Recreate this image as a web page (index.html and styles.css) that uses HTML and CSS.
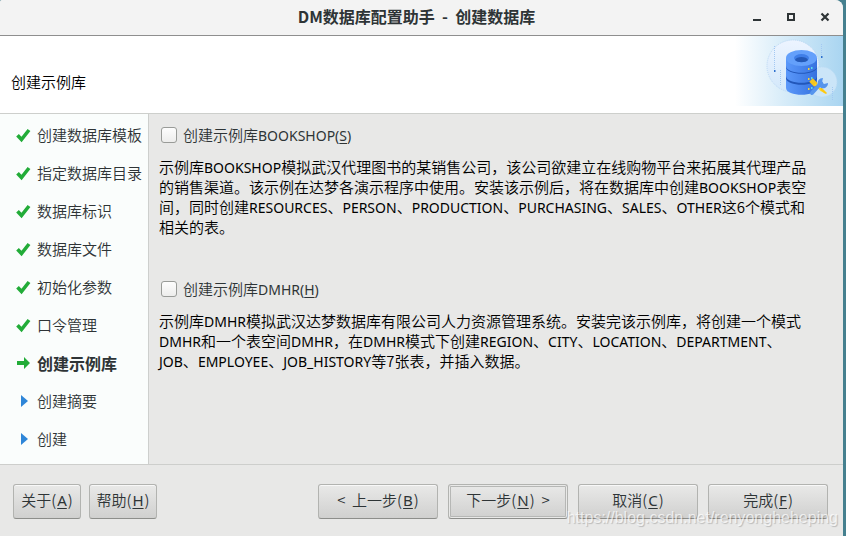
FILE: index.html
```html
<!DOCTYPE html>
<html lang="zh-CN">
<head>
    <meta charset="UTF-8">
    <meta name="viewport" content="width=device-width, initial-scale=1.0">
    <title>DM数据库配置助手 - 创建数据库</title>
    <link rel="stylesheet" href="styles.css">
</head>
<body>
<div class="window">
    <!-- Title bar -->
    <header class="titlebar">
        <h1>DM数据库配置助手&nbsp; - &nbsp;创建数据库</h1>
        <div class="window-buttons">
            <button aria-label="最小化"><svg width="10" height="10" viewBox="0 0 10 10"><path d="M1 8h8" stroke="#2e3436" stroke-width="2"/></svg></button>
            <button aria-label="最大化"><svg width="10" height="10" viewBox="0 0 10 10"><path d="M2 2h6v6H2z" fill="none" stroke="#2e3436" stroke-width="2"/></svg></button>
            <button aria-label="关闭"><svg width="10" height="10" viewBox="0 0 10 10"><path d="M1.500 1.500l7 7M8.500 1.500l-7 7" stroke="#2e3436" stroke-width="2.200"/></svg></button>
        </div>
    </header>

    <!-- Page heading -->
    <div class="banner">
        <h2>创建示例库</h2>
        <svg class="banner-art" width="108" height="70" viewBox="0 0 108 70">
            <defs>
                <linearGradient id="sky"><stop offset="0" stop-color="#fff"/><stop offset="0.500" stop-color="#d3eaf8"/><stop offset="1" stop-color="#a9d5f1"/></linearGradient>
                <linearGradient id="disk"><stop offset="0" stop-color="#5b98fa"/><stop offset="1" stop-color="#3672df"/></linearGradient>
                <linearGradient id="bubble" x2="0" y2="1"><stop offset="0" stop-color="#edf4ff"/><stop offset="1" stop-color="#d3e8fa"/></linearGradient>
            </defs>
            <path d="M0 0h108v70H0z" fill="url(#sky)"/>
            <circle cx="58" cy="30" r="26" fill="url(#bubble)" stroke="#bcd8f5" stroke-dasharray="1 1"/>
            <circle cx="87" cy="46" r="15" fill="#cbe5f8" stroke="#bcdcf5" stroke-dasharray="1 1"/>
            <path d="M39.500 10v25M45.500 34v15M86.500 8v12M97.500 51v13" stroke="#a3c8f2" stroke-dasharray="1 1"/>
            <path d="M39 34h1.500v2H39zM86 20h1.500v2H86z" fill="#2d70cf"/>
            <path d="M51 42v10c0 9 31 9 31 0V42z" fill="url(#disk)"/>
            <path d="M51 42c0 9 31 9 31 0v-3H51z" fill="#2257ba"/>
            <path d="M51 32v8c0 9 31 9 31 0v-8z" fill="url(#disk)"/>
            <path d="M51 31c0 9 31 9 31 0v-3H51z" fill="#2257ba"/>
            <path d="M51 22v8c0 9 31 9 31 0v-8z" fill="url(#disk)"/>
            <ellipse cx="66.500" cy="22" rx="15.500" ry="8" fill="#64a0fb"/>
            <ellipse cx="66.500" cy="22" rx="7.500" ry="4" fill="#3f7ee8"/>
            <path d="M60 24c1-4 12-4 13 0-2 3-11 3-13 0z" fill="#2459b7"/>
            <path d="M73 32h1.500v2H73zM73 42h1.500v2H73zM73 52h1.500v2H73z" fill="#f6cf3a"/>
            <path d="M76 31h1.500v2H76zM76 41h1.500v2H76zM76 51h1.500v2H76z" fill="#58dcec"/>
            <path d="M76 44l5 5" stroke="#f4c520" stroke-width="5"/>
            <path d="M80 48l7 7" stroke="#ffd426" stroke-width="2"/>
            <path d="M85 52l2 0 5 5-1 1c-3-1-5-3-6-6z" fill="#ffc90e"/>
            <path d="M77 57l9-10" stroke="#5695ed" stroke-width="4" stroke-linecap="round"/>
            <path d="M83 49c-1-4 1-7 5-7l-1 4 2 2 4-1c0 4-3 6-7 5z" fill="#5695ed"/>
        </svg>
    </div>

    <div class="content">
        <!-- Wizard steps -->
        <ol class="steps">
            <li><svg class="icon" viewBox="0 0 16 16"><path d="M2.500 8.200l4 4.300L14 3" fill="none" stroke="#22ac38" stroke-width="3.600"/></svg>创建数据库模板</li>
            <li><svg class="icon" viewBox="0 0 16 16"><path d="M2.500 8.200l4 4.300L14 3" fill="none" stroke="#22ac38" stroke-width="3.600"/></svg>指定数据库目录</li>
            <li><svg class="icon" viewBox="0 0 16 16"><path d="M2.500 8.200l4 4.300L14 3" fill="none" stroke="#22ac38" stroke-width="3.600"/></svg>数据库标识</li>
            <li><svg class="icon" viewBox="0 0 16 16"><path d="M2.500 8.200l4 4.300L14 3" fill="none" stroke="#22ac38" stroke-width="3.600"/></svg>数据库文件</li>
            <li><svg class="icon" viewBox="0 0 16 16"><path d="M2.500 8.200l4 4.300L14 3" fill="none" stroke="#22ac38" stroke-width="3.600"/></svg>初始化参数</li>
            <li><svg class="icon" viewBox="0 0 16 16"><path d="M2.500 8.200l4 4.300L14 3" fill="none" stroke="#22ac38" stroke-width="3.600"/></svg>口令管理</li>
            <li class="current" aria-current="step"><svg class="icon" viewBox="0 0 16 16"><path d="M2 6h7V2l6 6-6 6v-4H2z" fill="#22ac38"/></svg>创建示例库</li>
            <li><svg class="icon" viewBox="0 0 16 16"><path d="M6 2l7 6-7 6z" fill="#2e86d8"/></svg>创建摘要</li>
            <li><svg class="icon" viewBox="0 0 16 16"><path d="M6 2l7 6-7 6z" fill="#2e86d8"/></svg>创建</li>
        </ol>

        <!-- Sample databases -->
        <main class="options">
            <section>
                <label class="check"><input type="checkbox"><span>创建示例库<span class="en">BOOKSHOP(<u>S</u>)</span></span></label>
                <p>示例库<span class="en">BOOKSHOP</span>模拟武汉代理图书的某销售公司，该公司欲建立在线购物平台来拓展其代理产品的销售渠道。该示例在达梦各演示程序中使用。安装该示例后，将在数据库中创建<span class="en">BOOKSHOP</span>表空间，同时创建<span class="en">RESOURCES</span>、<span class="en">PERSON</span>、<span class="en">PRODUCTION</span>、<span class="en">PURCHASING</span>、<span class="en">SALES</span>、<span class="en">OTHER</span>这6个模式和相关的表。</p>
            </section>
            <section>
                <label class="check"><input type="checkbox"><span>创建示例库<span class="en">DMHR(<u>H</u>)</span></span></label>
                <p>示例库<span class="en">DMHR</span>模拟武汉达梦数据库有限公司人力资源管理系统。安装完该示例库，将创建一个模式<span class="en">DMHR</span>和一个表空间<span class="en">DMHR</span>，在<span class="en">DMHR</span>模式下创建<span class="en">REGION</span>、<span class="en">CITY</span>、<span class="en">LOCATION</span>、<span class="en">DEPARTMENT</span>、<span class="en">JOB</span>、<span class="en">EMPLOYEE</span>、<span class="en">JOB_HISTORY</span>等7张表，并插入数据。</p>
            </section>
        </main>
    </div>

    <!-- Buttons -->
    <footer class="footer">
        <div class="group left">
            <button class="btn">关于(<u>A</u>)</button>
            <button class="btn">帮助(<u>H</u>)</button>
        </div>
        <div class="group right">
            <button class="btn">&lt;&nbsp; 上一步(<u>B</u>)</button>
            <button class="btn default">下一步(<u>N</u>)&nbsp; &gt;</button>
            <button class="btn">取消(<u>C</u>)</button>
            <button class="btn">完成(<u>F</u>)</button>
        </div>
    </footer>
</div>
<div class="watermark">https://blog.csdn.net/renyongheheping</div>
</body>
</html>
```
FILE: styles.css
```css
* {
    box-sizing: border-box;
}

body {
    margin: 0;
    padding-right: 3px;
    min-height: 100vh;
    display: flex;
    background: #45808f;
    color: #2e3436;
    font-family: "Noto Sans CJK SC", "Noto Sans", sans-serif;
    font-size: 15px;
    font-weight: 350;
    line-height: 20px;
}

.en {
    font-family: "Noto Sans", sans-serif;
    font-size: 14px;
    font-weight: 400;
    line-height: 1;
}

.window {
    flex: 1;
    display: flex;
    flex-direction: column;
    background: #e8e8e7;
    border-radius: 2px 8px 0 0;
    overflow: hidden;
}

/* Title bar */
.titlebar {
    display: grid;
    grid-template-columns: 1fr auto 1fr;
    align-items: center;
    height: 36px;
    padding: 0 12px;
    background: #f3f3f3;
    border-bottom: 1px solid #8e8e8e;
}

.titlebar h1 {
    grid-column: 2;
    margin: 0;
    padding: 0 10px 4px 0;
    font-size: 16px;
    font-weight: 700;
}

.window-buttons {
    display: flex;
    justify-content: flex-end;
    gap: 22px;
}

.window-buttons button {
    display: flex;
    padding: 0 1px 2px;
    border: none;
    background: none;
}

/* Page heading */
.banner {
    display: flex;
    justify-content: space-between;
    height: 78px;
    background: #fff;
    border-bottom: 1px solid #cdcfcc;
}

.banner h2 {
    margin: 0;
    padding: 36px 11px 0;
    color: #000;
    font-size: 15px;
    font-weight: 350;
}

/* Steps and options */
.content {
    flex: 1;
    display: flex;
    border-bottom: 1px solid #cdcecc;
}

.steps {
    flex: 0 0 149px;
    display: flex;
    flex-direction: column;
    gap: 18px;
    margin: 0;
    padding: 11px 0 12px 15px;
    list-style: none;
    white-space: nowrap;
    background: #fafdfc;
    border-right: 1px solid #cdcfcd;
}

.steps li {
    display: flex;
    align-items: center;
    gap: 6px;
}

.steps .current {
    font-size: 16px;
    font-weight: 700;
}

.icon {
    width: 16px;
    height: 16px;
}

.options {
    flex: 1;
    display: flex;
    flex-direction: column;
    gap: 42px;
    padding: 11px 28px 12px 10px;
}

.check {
    display: flex;
    align-items: center;
    gap: 4px;
    margin-bottom: 12px;
}

.check input {
    appearance: none;
    width: 16px;
    height: 16px;
    margin: 0 2px;
    border: 1px solid #999b98;
    border-radius: 3px;
    background: linear-gradient(#fdfdfd, #ededec);
}

.options p {
    margin: 0;
    color: #000;
}

/* Footer */
.footer {
    display: flex;
    justify-content: space-between;
    padding: 19px 15px 17px 13px;
}

.group {
    display: flex;
}

.left {
    gap: 8px;
}

.right {
    gap: 10px;
}

.btn {
    width: 120px;
    height: 35px;
    padding: 0 0 3px;
    border: 1px solid #b2b3b0;
    border-bottom-color: #8d8e8b;
    border-radius: 3px;
    background: linear-gradient(#e9e9e8, #d0d0cf);
    box-shadow: inset 0 1px #f8f8f8;
    color: #2e3436;
    font: inherit;
}

.left .btn {
    width: 68px;
}

.default {
    box-shadow: inset 0 0 0 1px #e9e9e8, inset 0 0 0 2px #b6b7b5;
}

u {
    text-underline-offset: 2px;
}

.btn u {
    margin: 0 1px;
    font-family: "Noto Sans", sans-serif;
    font-weight: 400;
    line-height: 1;
}

.watermark {
    position: absolute;
    right: 8px;
    bottom: 8px;
    color: rgba(255, 255, 255, 0.7);
    font-family: "Liberation Sans", Arial, sans-serif;
    font-size: 16px;
    font-weight: 400;
    text-shadow: 1px 1px 1px rgba(0, 0, 0, 0.2);
    pointer-events: none;
}
```
